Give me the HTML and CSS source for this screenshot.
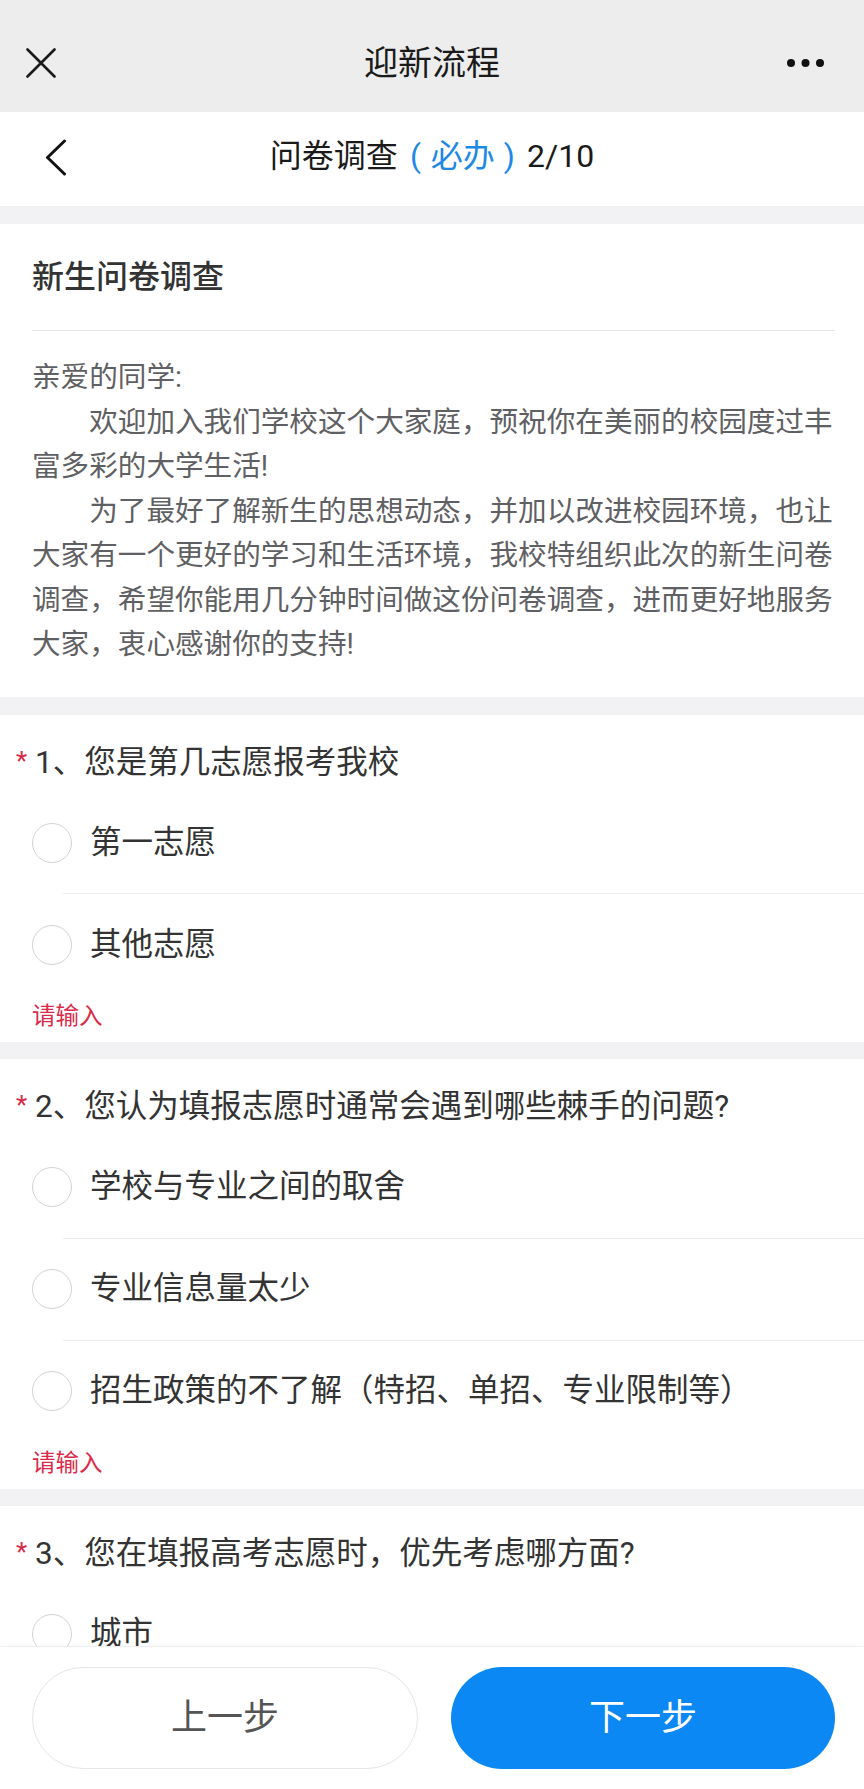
FILE: index.html
```html
<!DOCTYPE html>
<html lang="zh-CN">
<head>
<meta charset="utf-8">
<title>迎新流程</title>
<link rel="stylesheet" href="styles.css">
</head>
<body>
<div class="app">
  <header class="topbar">
    <svg class="close-icon" width="30" height="30" viewBox="0 0 30 30"><path d="M1.5 1.5 L28.5 28.5 M28.5 1.5 L1.5 28.5" stroke="#1a1a1a" stroke-width="2.6" fill="none" stroke-linecap="round"/></svg>
    <div class="topbar-title">迎新流程</div>
    <svg class="more-icon" width="38" height="10" viewBox="0 0 38 10"><circle cx="4" cy="5" r="4" fill="#111"/><circle cx="18.5" cy="5" r="4" fill="#111"/><circle cx="33" cy="5" r="4" fill="#111"/></svg>
  </header>
  <div class="subbar">
    <svg class="back-icon" width="22" height="37" viewBox="0 0 22 37"><path d="M19.5 2 L2.5 18.5 L19.5 35" stroke="#111" stroke-width="3" fill="none" stroke-linecap="round" stroke-linejoin="round"/></svg>
    <div class="subbar-title">问卷调查<span class="must"><span class="paren-l">(</span>必办<span class="paren-r">)</span></span>2/10</div>
  </div>
  <main class="scroll">
    <section class="card intro">
      <h1 class="intro-title">新生问卷调查</h1>
      <div class="intro-divider"></div>
      <div class="intro-body">
        <p class="greet">亲爱的同学:</p>
        <p class="para">欢迎加入我们学校这个大家庭，预祝你在美丽的校园度过丰富多彩的大学生活!</p>
        <p class="para">为了最好了解新生的思想动态，并加以改进校园环境，也让大家有一个更好的学习和生活环境，我校特组织此次的新生问卷调查，希望你能用几分钟时间做这份问卷调查，进而更好地服务大家，衷心感谢你的支持!</p>
      </div>
    </section>

    <section class="card question">
      <div class="q-title"><span class="req">*</span>1、您是第几志愿报考我校</div>
      <ul class="options">
        <li class="option"><span class="radio"></span><span class="opt-text">第一志愿</span></li>
        <li class="option"><span class="radio"></span><span class="opt-text">其他志愿</span></li>
      </ul>
      <div class="hint">请输入</div>
    </section>

    <section class="card question">
      <div class="q-title"><span class="req">*</span>2、您认为填报志愿时通常会遇到哪些棘手的问题?</div>
      <ul class="options">
        <li class="option"><span class="radio"></span><span class="opt-text">学校与专业之间的取舍</span></li>
        <li class="option"><span class="radio"></span><span class="opt-text">专业信息量太少</span></li>
        <li class="option"><span class="radio"></span><span class="opt-text">招生政策的不了解（特招、单招、专业限制等）</span></li>
      </ul>
      <div class="hint">请输入</div>
    </section>

    <section class="card question last">
      <div class="q-title"><span class="req">*</span>3、您在填报高考志愿时，优先考虑哪方面?</div>
      <ul class="options">
        <li class="option"><span class="radio"></span><span class="opt-text">城市</span></li>
      </ul>
    </section>
  </main>
  <footer class="footer">
    <button class="btn btn-prev">上一步</button>
    <button class="btn btn-next">下一步</button>
  </footer>
</div>
</body>
</html>
```

FILE: styles.css
```css
* {
  box-sizing: border-box;
}

html, body {
  margin: 0;
  padding: 0;
}

body {
  font-family: Roboto, "Noto Sans CJK SC", sans-serif;
  color: #333;
  background: #f2f2f4;
}

.app {
  height: 100vh;
  display: flex;
  flex-direction: column;
  overflow: hidden;
}

/* top bar */
.topbar {
  height: 112px;
  flex: 0 0 112px;
  background: #ededed;
  display: grid;
  grid-template-columns: 1fr auto 1fr;
  align-items: center;
  padding-top: 14px;
}

.close-icon {
  margin-left: 26px;
}

.topbar-title {
  font-size: 34px;
  line-height: 40px;
  color: #1a1a1a;
}

.more-icon {
  justify-self: end;
  margin-right: 39px;
}

/* sub bar */
.subbar {
  height: 94px;
  flex: 0 0 94px;
  background: #fff;
  position: relative;
  display: flex;
  align-items: center;
  justify-content: center;
}

.back-icon {
  position: absolute;
  left: 45px;
  top: 27px;
}

.subbar-title {
  font-size: 32px;
  line-height: 40px;
  color: #1a1a1a;
  margin-top: -6px;
}

.must {
  color: #1e88e5;
}

.paren-l {
  margin: 0 10px 0 12px;
}

.paren-r {
  margin: 0 12px 0 9px;
}

/* scroll area */
.scroll {
  flex: 1 1 auto;
  overflow: hidden;
  padding-top: 18px;
  display: flex;
  flex-direction: column;
  gap: 17px;
}

.card {
  background: #fff;
  flex: 0 0 auto;
}

/* intro */
.intro {
  padding: 28px 29px 30px 32px;
}

.intro + .card {
  margin-top: 1px;
}

.intro-title {
  margin: 0;
  font-size: 32px;
  line-height: 50px;
  font-weight: 500;
  color: #333;
}

.intro-divider {
  height: 1px;
  background: #e4e4e4;
  margin: 28px 0 24px;
}

.intro-body {
  font-size: 28.6px;
  line-height: 44.5px;
  color: #5f6063;
}

.intro-body p {
  margin: 0;
}

.para {
  text-indent: 2em;
}

/* questions */
.question {
  padding-top: 24px;
}

.question.last {
  padding-bottom: 60px;
}

.q-title {
  font-size: 31.5px;
  line-height: 48px;
  color: #333;
  padding-left: 16px;
  display: flex;
  align-items: flex-start;
}

.req {
  color: #d92a4a;
  font-size: 26px;
  line-height: 44px;
  width: 19px;
  flex: 0 0 19px;
}

.options {
  list-style: none;
  margin: 5.5px 0 0;
  padding: 0;
}

.option {
  height: 102px;
  display: flex;
  align-items: center;
  padding-left: 32px;
  position: relative;
  padding-bottom: 1px;
}

.option + .option::before {
  content: "";
  position: absolute;
  left: 63px;
  right: 0;
  top: -1px;
  height: 1px;
  background: #ececec;
}

.radio {
  width: 40px;
  height: 40px;
  border-radius: 50%;
  border: 1.5px solid #d3d3d3;
  flex: 0 0 40px;
}

.opt-text {
  margin-left: 18px;
  font-size: 31.5px;
  line-height: 40px;
  color: #333;
}

.hint {
  font-size: 23.5px;
  line-height: 34px;
  color: #d92a4a;
  padding: 3px 0 9px 32px;
}

/* footer */
.footer {
  flex: 0 0 143px;
  height: 143px;
  background: #fff;
  border-top: 1px solid #efefef;
  box-shadow: 0 -1px 4px rgba(0, 0, 0, 0.03);
  display: flex;
  gap: 33px;
  padding: 20px 29px 20px 32px;
  position: relative;
  z-index: 1;
}

.btn {
  flex: 1 1 0;
  height: 102px;
  border-radius: 51px;
  font-family: Roboto, "Noto Sans CJK SC", sans-serif;
  font-size: 36px;
  line-height: 100px;
  padding: 0;
  cursor: pointer;
}

.btn-prev {
  background: #fff;
  border: 1.5px solid #e6e6e6;
  color: #555;
}

.btn-next {
  background: #0c88f4;
  border: none;
  color: #fff;
}
```
